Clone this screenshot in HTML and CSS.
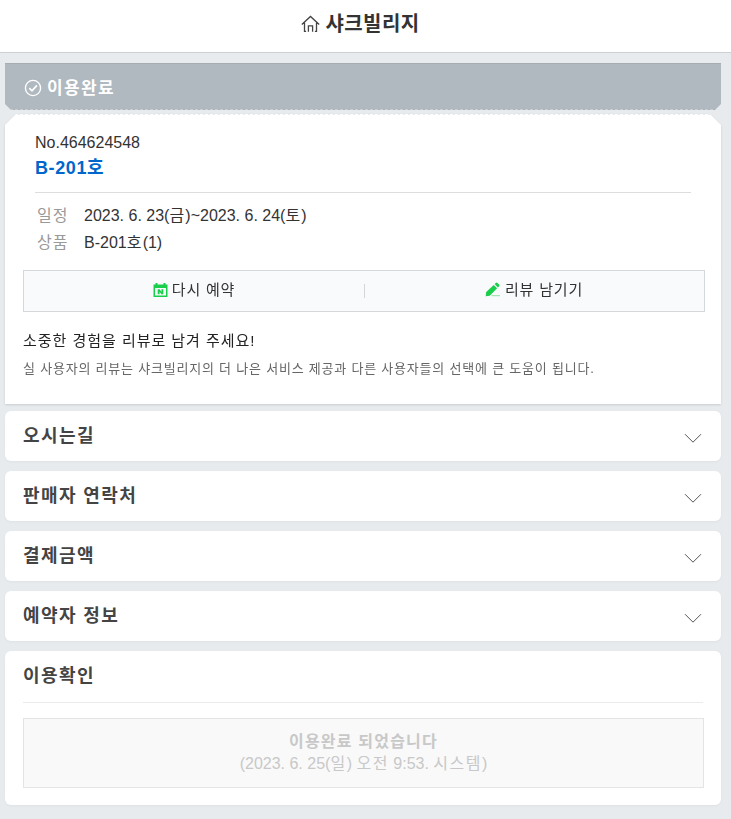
FILE: index.html
```html
<!DOCTYPE html>
<html lang="ko">
<head>
<meta charset="utf-8">
<title>샤크빌리지</title>
<link rel="stylesheet" href="styles.css">
</head>
<body>
<header class="top">
  <svg class="home" width="19" height="18" viewBox="0 0 19 18" fill="none" stroke="#444" stroke-width="1.3"><path d="M.8 9.6 9.5 1.5l8.7 8.1M3.5 7.7v8.7h1.6M15.5 7.7v8.7h-1.6M7.4 16.8v-5.9h4.2v5.9"/></svg>
  <h1>샤크빌리지</h1>
</header>
<main>
  <div class="status">
    <svg width="18" height="18" viewBox="0 0 18 18" fill="none" stroke="#fff" stroke-width="1.4"><circle cx="9" cy="9" r="7.6"/><path d="m5.3 9.2 2.7 2.6 4.9-5.4" stroke-width="1.7"/></svg>
    <strong>이용완료</strong>
  </div>
  <section class="ticket-wrap">
    <div class="ticket">
      <div class="summary">
        <p class="number">No.464624548</p>
        <h2>B-201호</h2>
      </div>
      <dl class="details">
        <dt>일정</dt><dd>2023. 6. 23(<span class="ko">금</span>)~2023. 6. 24(<span class="ko">토</span>)</dd>
        <dt>상품</dt><dd>B-201<span class="ko">호</span>(1)</dd>
      </dl>
      <div class="actions">
        <a class="rebook"><svg width="15" height="16" viewBox="0 0 15 16"><path fill="#19ce4b" fill-rule="evenodd" d="M.5 2.5h2V1h2v1.5h6V1h2v1.5h2V15H.5zM2 6v7.5h11V6z"/><path fill="#19ce4b" d="M4.7 7.3h2l1.7 2.6V7.3h1.9v5h-2L6.6 9.7v2.6H4.7z"/></svg><span>다시 예약</span></a>
        <a class="review"><svg width="16" height="16" viewBox="0 0 16 16"><path fill="#19ce4b" d="M.7 14.3 1.2 10 8.7 2.9l3.4 3.4-7.4 7.4zM9.6 2.1l1.2-1.2q.8-.7 1.6 0l1.7 1.7q.7.8 0 1.6l-1.2 1.2z"/><path stroke="#8ce29f" d="M6.5 13.7H15"/></svg><span>리뷰 남기기</span></a>
      </div>
      <p class="invite">소중한 경험을 리뷰로 남겨 주세요!</p>
      <p class="hint">실 사용자의 리뷰는 샤크빌리지의 더 나은 서비스 제공과 다른 사용자들의 선택에 큰 도움이 됩니다.</p>
    </div>
  </section>
  <section class="panel"><h3>오시는길</h3><svg class="arrow" width="18" height="11" viewBox="0 0 18 11"><path d="m1 1.2 8 8 8-8"/></svg></section>
  <section class="panel"><h3>판매자 연락처</h3><svg class="arrow" width="18" height="11" viewBox="0 0 18 11"><path d="m1 1.2 8 8 8-8"/></svg></section>
  <section class="panel"><h3>결제금액</h3><svg class="arrow" width="18" height="11" viewBox="0 0 18 11"><path d="m1 1.2 8 8 8-8"/></svg></section>
  <section class="panel"><h3>예약자 정보</h3><svg class="arrow" width="18" height="11" viewBox="0 0 18 11"><path d="m1 1.2 8 8 8-8"/></svg></section>
  <section class="panel confirm">
    <h3>이용확인</h3>
    <div class="done"><strong>이용완료 되었습니다</strong><span>(2023. 6. 25(<span class="ko">일</span>) <span class="ko">오전</span> 9:53. <span class="ko">시스템</span>)</span></div>
  </section>
</main>
</body>
</html>
```
FILE: styles.css
```css
* { box-sizing: border-box; }
body {
  margin: 0;
  height: 819px;
  overflow: hidden;
  background: #e7ebee;
  color: #333;
  font-family: "Liberation Sans", "Noto Sans CJK KR", sans-serif;
}
h1, h2, h3, p, dl, dd { margin: 0; }
svg { flex: none; display: block; }
.ko { letter-spacing: 1.2px; }

.top {
  height: 53px;
  padding: 0 10px 5px 0;
  display: flex;
  align-items: center;
  justify-content: center;
  gap: 5px;
  background: #fff;
  border-bottom: 1px solid #ccd0d4;
}
.top h1 { padding-top: 1px; font-size: 20px; line-height: 30px; letter-spacing: .45px; }
main { padding: 10px 10px 0 5px; }

.status {
  height: 47px;
  padding: 2px 0 0 19px;
  display: flex;
  align-items: center;
  gap: 5px;
  color: #fff;
  background: linear-gradient(90deg, #c9cdd2 60%, #a9b0b7 0) 0 45px / 5px 1px repeat-x, #b0b8c0;
  border-top: 1px solid #a5adb4;
  clip-path: polygon(0 0, 100% 0, 100% 41px, calc(100% - 6px) 100%, 6px 100%, 0 41px);
}
.status strong { padding-top: 1px; font-size: 17px; line-height: 24px; letter-spacing: 1.4px; }

.ticket-wrap { margin-top: 4px; height: 290px; filter: drop-shadow(0 1px 1px rgba(0, 0, 0, .12)); }
.ticket {
  height: 290px;
  padding: 18px 16px 0 18px;
  background: linear-gradient(90deg, #fff 60%, #e7ebee 0) 0 0 / 5px 1px repeat-x, linear-gradient(#fff, #fff) 0 1px no-repeat;
  clip-path: polygon(11px 0, calc(100% - 11px) 0, 100% 11px, 100% 100%, 0 100%, 0 11px);
}
.summary { height: 61px; margin: 0 14px 0 12px; border-bottom: 1px solid #ddd; }
.number { font-size: 16px; line-height: 22px; }
.summary h2 { font-size: 18px; line-height: 29px; letter-spacing: .6px; color: #06c; }
.details {
  display: grid;
  grid-template-columns: 47px 1fr;
  grid-auto-rows: 27px;
  padding: 9px 0 0 14px;
  height: 77px;
  font-size: 16px;
  line-height: 27px;
}
.details dt { color: #999; letter-spacing: 1.1px; }
.actions {
  height: 42px;
  display: grid;
  grid-template-columns: 1fr 1fr;
  border: 1px solid #d5d8db;
  background: #f9fafc;
}
.actions a { display: flex; align-items: center; justify-content: center; gap: 4px; padding-bottom: 2px; font-size: 15px; line-height: 24px; letter-spacing: .8px; }
.review { background: linear-gradient(#d3d6d9, #d3d6d9) 0 13px / 1px 14px no-repeat; }
.invite { margin-top: 17px; font-size: 15px; line-height: 24px; letter-spacing: .97px; color: #222; }
.hint { margin-top: 5px; font-size: 13px; line-height: 22px; letter-spacing: .79px; color: #666; white-space: nowrap; }

.panel {
  height: 50px;
  margin-bottom: 10px;
  padding: 0 19px 0 18px;
  display: flex;
  justify-content: space-between;
  background: #fff;
  border-radius: 6px;
  box-shadow: 0 1px 3px rgba(0, 0, 0, .04);
}
.ticket-wrap + .panel { margin-top: 7px; }
.panel h3 { font-size: 18px; line-height: 50px; letter-spacing: 1.4px; color: #444; }
.arrow { margin-top: 22px; fill: none; stroke: #555; stroke-width: 1; }
.confirm { display: block; height: 154px; padding-right: 17px; }
.confirm h3 { height: 52px; margin-right: 1px; border-bottom: 1px solid #e8eaec; }
.done {
  height: 70px;
  margin-top: 15px;
  display: flex;
  flex-direction: column;
  align-items: center;
  justify-content: center;
  border: 1px solid #e2e4e5;
  background: #f9f9f9;
  color: #c8c8c8;
  font-size: 16px;
  line-height: 22px;
}
.done strong { letter-spacing: 1.2px; }
.done .ko { letter-spacing: 1.5px; }
```
